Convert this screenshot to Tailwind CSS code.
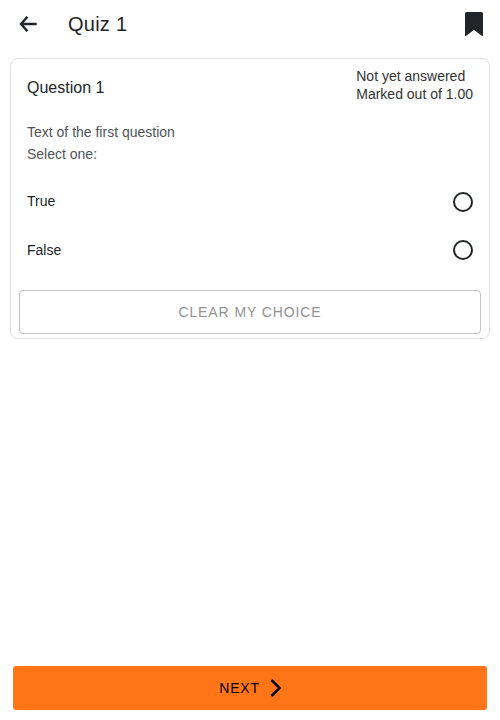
<!DOCTYPE html>
<html lang="en">
<head>
  <meta charset="UTF-8" />
  <title>Quiz 1</title>
  <script src="https://cdn.jsdelivr.net/npm/@tailwindcss/browser@4"></script>
</head>
<body class="bg-white font-['Liberation_Sans',sans-serif] text-[#212529]">
  <div class="flex flex-col h-[720px] w-[500px]">

    <!-- Header -->
    <header class="flex items-center h-[48px] shrink-0 pl-[16px] pr-[17px]">
      <svg class="w-[24px] h-[24px]" viewBox="0 0 24 24" fill="none" stroke="#212529" stroke-width="2.4"><path d="M11.5 4.8L5 12l6.5 7.2M5.5 12h15.2"/></svg>
      <h1 class="ml-[28px] text-[20px] leading-[24px] tracking-[0.25px] flex-1">Quiz 1</h1>
      <svg class="w-[18px] h-[24px]" viewBox="0 0 18 24" fill="#212529"><path d="M0 1.5A1.5 1.5 0 0 1 1.5 0h15A1.5 1.5 0 0 1 18 1.5v22a.5.5 0 0 1-.8.4L9 18 .8 23.9a.5.5 0 0 1-.8-.4z"/></svg>
    </header>

    <!-- Question card -->
    <section class="mx-[10px] mt-[10px] h-[281px] border border-[#e0e0e0] rounded-[8px] flex flex-col">
      <div class="flex items-start justify-between pl-[16px] pr-[16px] pt-[8px]">
        <h2 class="text-[16px] leading-[18px] mt-[12px]">Question 1</h2>
        <div class="text-[14px] leading-[18px] text-[#333]">
          <p>Not yet answered</p>
          <p>Marked out of 1.00</p>
        </div>
      </div>
      <div class="px-[16px] mt-[18px] text-[14px] leading-[22px] text-[#4f5358]">
        <p>Text of the first question</p>
        <p>Select one:</p>
      </div>
      <div class="mt-[12px] flex flex-col">
        <label class="flex items-center justify-between h-[49px] pl-[16px] pr-[16px] text-[14px]">
          <span>True</span>
          <span class="w-[20px] h-[20px] rounded-full border-2 border-[#212529]"></span>
        </label>
        <label class="flex items-center justify-between h-[48px] pl-[16px] pr-[16px] text-[14px]">
          <span>False</span>
          <span class="w-[20px] h-[20px] rounded-full border-2 border-[#212529]"></span>
        </label>
      </div>
      <button class="mx-[8px] mt-[16px] h-[44px] border border-[#c4c4c8] rounded-[4px] text-[14px] tracking-[0.9px] text-[#929292]">CLEAR MY CHOICE</button>
    </section>

    <!-- Footer action -->
    <div class="mt-auto px-[13px] pb-[10px]">
      <button class="w-full h-[44px] bg-[#ff7518] rounded-[3px] flex items-center justify-center text-[14px] tracking-[0.8px] text-black">
        NEXT
        <svg class="w-[16px] h-[24px] ml-[5px]" viewBox="0 0 16 24" fill="none" stroke="#000" stroke-width="2.5"><path d="M6.5 4l8 8-8 8"/></svg>
      </button>
    </div>
  </div>
</body>
</html>
